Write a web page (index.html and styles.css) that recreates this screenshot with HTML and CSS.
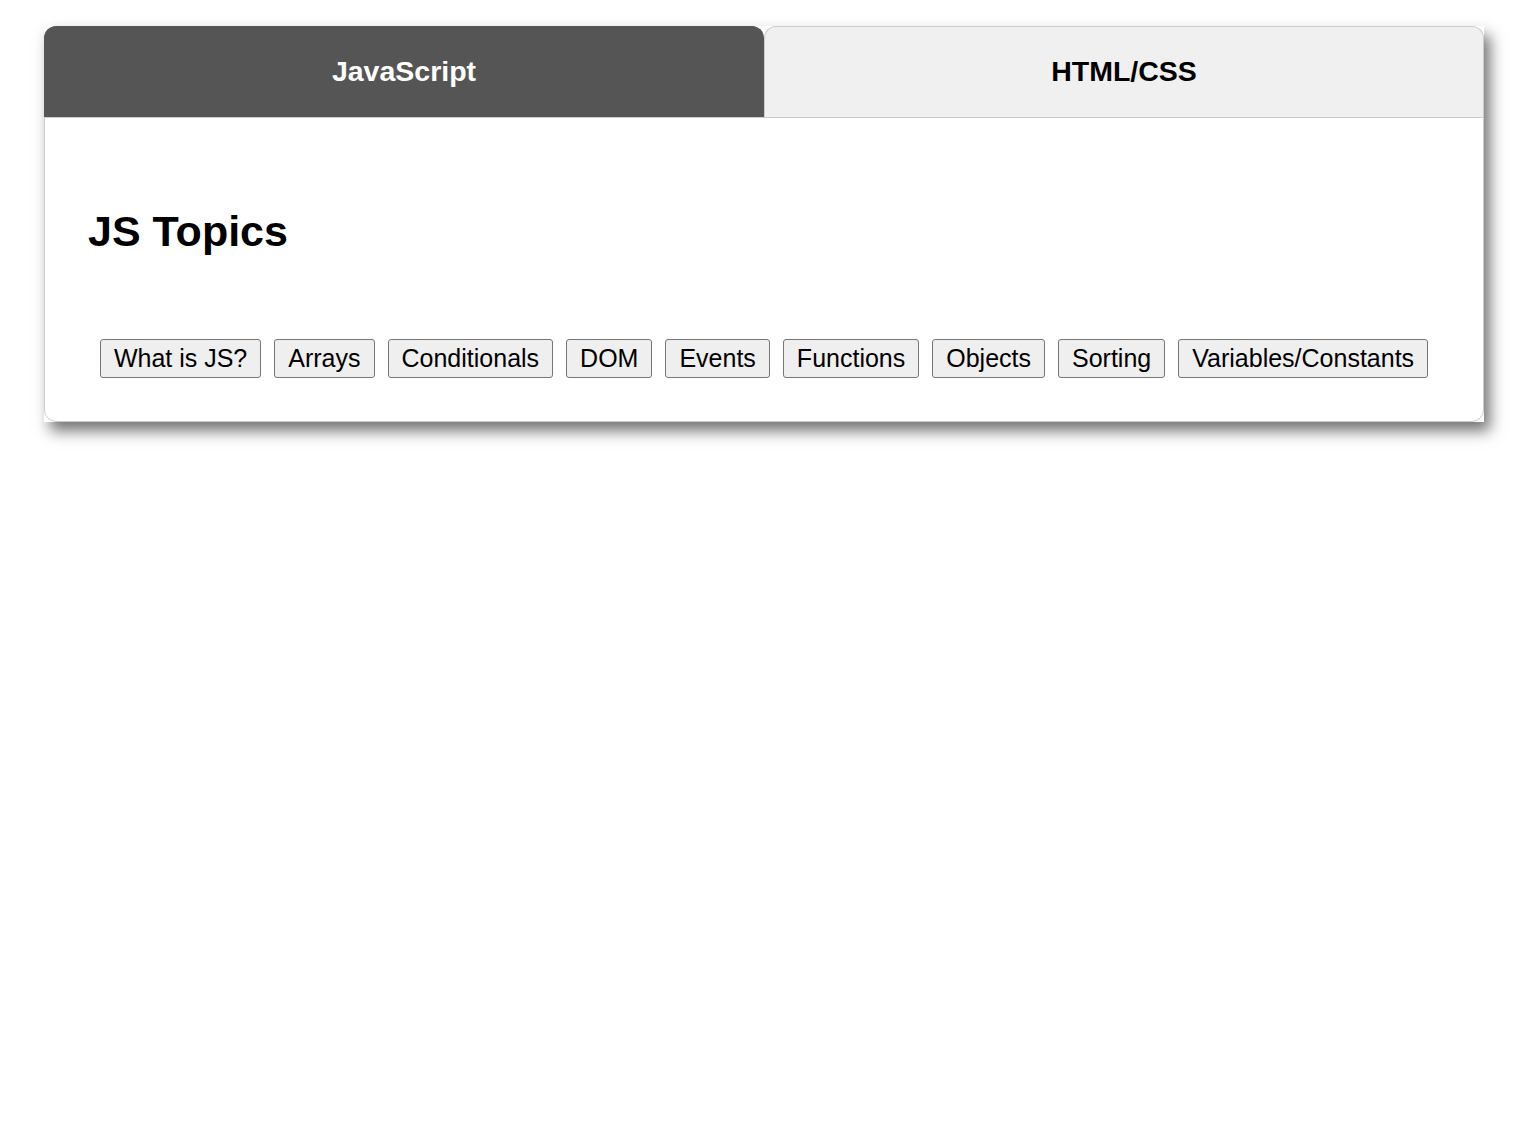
FILE: index.html
```html
<!DOCTYPE html>
<html>
<head>
  <meta charset="UTF-8">
  <title>Topics</title>
  <link rel="stylesheet" href="styles.css">
</head>
<body>
  <div class="panel">
    <div class="tabs">
      <button class="tab tab-active">JavaScript</button>
      <button class="tab">HTML/CSS</button>
    </div>

    <div class="tab-content">
      <h1 class="topics-title">JS Topics</h1>
      <div class="topics">
        <button class="topic-button">What is JS?</button>
        <button class="topic-button">Arrays</button>
        <button class="topic-button">Conditionals</button>
        <button class="topic-button">DOM</button>
        <button class="topic-button">Events</button>
        <button class="topic-button">Functions</button>
        <button class="topic-button">Objects</button>
        <button class="topic-button">Sorting</button>
        <button class="topic-button">Variables/Constants</button>
      </div>
    </div>
  </div>
</body>
</html>
```

FILE: styles.css
```css
html, body {
  min-height: 100%;
}

body {
  margin: 0;
  padding: 26px 0 0 44px;
  min-height: 1112px;
  background-color: #fff;
  font-family: "Liberation Sans", Arial, sans-serif;
}

.panel {
  width: 1440px;
  background-color: #fff;
  box-shadow: 6px 9px 14px rgba(0, 0, 0, 0.55);
}

.tabs {
  display: flex;
}

.tab {
  flex: 1;
  height: 91px;
  padding-bottom: 2px;
  font-family: "Liberation Sans", Arial, sans-serif;
  font-size: 28.5px;
  font-weight: bold;
  color: #000;
  background-color: #f0f0f0;
  border: 1px solid #ccc;
  border-bottom: none;
  border-radius: 12px 12px 0 0;
  cursor: pointer;
}

.tab-active {
  background-color: #555;
  border-color: #555;
  color: #fff;
}

.tab-content {
  border: 1px solid #ccc;
  border-radius: 0 0 12px 12px;
  padding: 43px;
}

.topics-title {
  font-size: 43px;
  margin: 46px 0 83px;
}

.topics {
  display: flex;
  justify-content: center;
  gap: 13px;
}

.topic-button {
  font-family: "Liberation Sans", Arial, sans-serif;
  font-size: 25px;
  padding: 4px 13px;
  background-color: #efefef;
  border: 1px solid #767676;
  border-radius: 3px;
  color: #000;
}
```
